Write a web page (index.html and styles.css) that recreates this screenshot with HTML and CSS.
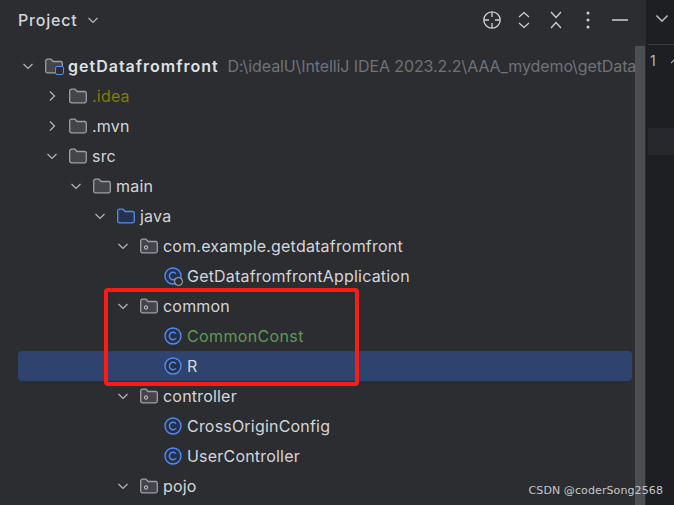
FILE: index.html
```html
<!DOCTYPE html>
<html lang="en">
<head>
<meta charset="utf-8">
<title>Project</title>
<link rel="stylesheet" href="styles.css">
</head>
<body>
<svg class="defs" width="0" height="0" aria-hidden="true">
  <defs>
    <symbol id="open" viewBox="0 0 16 16"><path d="M3.500 6 8 10.500 12.500 6" fill="none" stroke="#b4b8bf" stroke-width="1.200"/></symbol>
    <symbol id="closed" viewBox="0 0 16 16"><path d="M6 3.500 10.500 8 6 12.500" fill="none" stroke="#b4b8bf" stroke-width="1.200"/></symbol>
    <symbol id="folder" viewBox="0 0 18 16"><path d="M.7 3A1.800 1.800 0 0 1 2.500 1.200H6l2 2.300h7.500a1.800 1.800 0 0 1 1.800 1.800v7.700a1.800 1.800 0 0 1-1.800 1.800h-13A1.800 1.800 0 0 1 .7 13Z" fill="#43454a" stroke="#9da0a8" stroke-width="1.300"/></symbol>
    <symbol id="source" viewBox="0 0 18 16"><path d="M.7 3A1.800 1.800 0 0 1 2.500 1.200H6l2 2.300h7.500a1.800 1.800 0 0 1 1.800 1.800v7.700a1.800 1.800 0 0 1-1.800 1.800h-13A1.800 1.800 0 0 1 .7 13Z" fill="#25324d" stroke="#548af7" stroke-width="1.300"/></symbol>
    <symbol id="package" viewBox="0 0 18 16"><path d="M.7 3A1.800 1.800 0 0 1 2.500 1.200H6l2 2.300h7.500a1.800 1.800 0 0 1 1.800 1.800v7.700a1.800 1.800 0 0 1-1.800 1.800h-13A1.800 1.800 0 0 1 .7 13Z" fill="#43454a" stroke="#9da0a8" stroke-width="1.300"/><circle cx="6" cy="9.500" r="1.600" fill="none" stroke="#b4b8bf" stroke-width="1.100"/></symbol>
    <symbol id="class" viewBox="0 0 18 18"><circle cx="9" cy="9" r="8" fill="#25324d" stroke="#548af7" stroke-width="1.400"/><path d="M11.900 6.600A3.700 3.700 0 1 0 11.900 11.400" fill="none" stroke="#548af7" stroke-width="1.400"/></symbol>
  </defs>
</svg>

<main class="window">
  <section class="panel">
    <div class="scrollbar"></div>
    <header class="panel-head">
      <div class="panel-title">
        <span class="title-text">Project</span>
        <svg class="ico-14"><use href="#open"/></svg>
      </div>
      <div class="tools">
        <svg class="tool" viewBox="0 0 20 20"><circle cx="10" cy="10" r="8.200" fill="none" stroke="#ced0d6" stroke-width="1.300"/><path d="M10 2v5M10 13v5M2 10h5M13 10h5" stroke="#ced0d6" stroke-width="1.300"/></svg>
        <svg class="tool" viewBox="0 0 20 20"><path d="M5 7 10 2.500l5 4.500M5 13l5 4.500 5-4.500" fill="none" stroke="#ced0d6" stroke-width="1.300"/></svg>
        <svg class="tool" viewBox="0 0 20 20"><path d="M5 2 10 7.500 15 2M5 18l5-5.500L15 18" fill="none" stroke="#ced0d6" stroke-width="1.300"/></svg>
        <svg class="tool" viewBox="0 0 20 20"><circle cx="10" cy="3" r="1.500" fill="#ced0d6"/><circle cx="10" cy="10" r="1.500" fill="#ced0d6"/><circle cx="10" cy="17" r="1.500" fill="#ced0d6"/></svg>
        <svg class="tool" viewBox="0 0 20 20"><path d="M2 10h16" stroke="#ced0d6" stroke-width="1.500"/></svg>
      </div>
    </header>

    <div class="tree">
      <div class="row d0">
        <svg class="chev"><use href="#open"/></svg>
        <span class="root-icon">
          <svg class="ico-folder"><use href="#folder"/></svg>
          <i class="module-badge"></i>
        </span>
        <span class="name root-name">getDatafromfront</span>
        <span class="path">D:\idealU\IntelliJ IDEA 2023.2.2\AAA_mydemo\getData</span>
      </div>
      <div class="row d1"><svg class="chev"><use href="#closed"/></svg><svg class="ico-folder"><use href="#folder"/></svg><span class="name ignored">.idea</span></div>
      <div class="row d1"><svg class="chev"><use href="#closed"/></svg><svg class="ico-folder"><use href="#folder"/></svg><span class="name">.mvn</span></div>
      <div class="row d1"><svg class="chev"><use href="#open"/></svg><svg class="ico-folder"><use href="#folder"/></svg><span class="name">src</span></div>
      <div class="row d2"><svg class="chev"><use href="#open"/></svg><svg class="ico-folder"><use href="#folder"/></svg><span class="name">main</span></div>
      <div class="row d3"><svg class="chev"><use href="#open"/></svg><svg class="ico-folder"><use href="#source"/></svg><span class="name">java</span></div>
      <div class="row d4"><svg class="chev"><use href="#open"/></svg><svg class="ico-folder"><use href="#package"/></svg><span class="name">com.example.getdatafromfront</span></div>
      <div class="row d5">
        <span class="class-icon">
          <svg class="ico-class"><use href="#class"/></svg>
          <i class="run-badge"></i>
        </span>
        <span class="name">GetDatafromfrontApplication</span>
      </div>
      <div class="row d4"><svg class="chev"><use href="#open"/></svg><svg class="ico-folder"><use href="#package"/></svg><span class="name">common</span></div>
      <div class="row d5"><svg class="ico-class"><use href="#class"/></svg><span class="name added">CommonConst</span></div>
      <div class="row d5 selected"><svg class="ico-class"><use href="#class"/></svg><span class="name">R</span></div>
      <div class="row d4"><svg class="chev"><use href="#open"/></svg><svg class="ico-folder"><use href="#package"/></svg><span class="name">controller</span></div>
      <div class="row d5"><svg class="ico-class"><use href="#class"/></svg><span class="name">CrossOriginConfig</span></div>
      <div class="row d5"><svg class="ico-class"><use href="#class"/></svg><span class="name">UserController</span></div>
      <div class="row d4"><svg class="chev"><use href="#open"/></svg><svg class="ico-folder"><use href="#package"/></svg><span class="name">pojo</span></div>
    </div>
  </section>

  <section class="editor">
    <div class="tabs"><svg class="ico-16"><use href="#open"/></svg></div>
    <div class="gutter">
      <span>1</span>
      <svg class="fold" viewBox="0 0 8 8"><path d="M0 6 4 2 8 6" fill="none" stroke="#b4b8bf" stroke-width="1.200"/></svg>
    </div>
    <div class="caret-line"></div>
  </section>
</main>

<div class="callout"></div>
<div class="watermark">CSDN @coderSong2568</div>
</body>
</html>
```

FILE: styles.css
```css
* { box-sizing: border-box; }

html, body {
  margin: 0;
  height: 100%;
  overflow: hidden;
  background: #2b2d30;
}

body {
  font-family: Inter, "Liberation Sans", sans-serif;
  font-size: 16px;
  letter-spacing: .2px;
  color: #d4d6db;
}

.defs { position: absolute; }

.window {
  display: flex;
  width: 674px;
  height: 505px;
}

.panel {
  position: relative;
  flex: 0 0 647px;
  border-right: 1px solid #1e1f22;
  overflow: hidden;
}

.panel-head {
  display: flex;
  align-items: center;
  justify-content: space-between;
  height: 39px;
  padding: 0 16px 0 18px;
}

.panel-title {
  display: flex;
  align-items: center;
  gap: 7px;
}

.title-text {
  font-weight: 500;
  letter-spacing: .8px;
}

.ico-14 { width: 16px; height: 16px; }
.ico-16 { width: 20px; height: 20px; }

.tools {
  display: flex;
  align-items: center;
  gap: 12px;
}

.tool { width: 20px; height: 20px; }

.tree {
  position: relative;
  padding-top: 12px;
}

.row {
  display: flex;
  align-items: center;
  height: 30px;
  white-space: nowrap;
}

.d0 { padding-left: 20px; }
.d1 { padding-left: 44px; }
.d2 { padding-left: 68px; }
.d3 { padding-left: 92px; }
.d4 { padding-left: 115px; }
.d5 { padding-left: 164px; }

.chev {
  flex: none;
  width: 16px;
  height: 16px;
  margin-right: 9px;
}

.ico-folder {
  flex: none;
  width: 18px;
  height: 16px;
  margin-right: 5px;
}

.ico-class {
  flex: none;
  width: 18px;
  height: 18px;
  margin-right: 5px;
}

.root-icon, .class-icon {
  position: relative;
  display: flex;
  flex: none;
}

.module-badge {
  position: absolute;
  left: 10px;
  top: 8px;
  width: 9px;
  height: 9px;
  border: 1.500px solid #548af7;
  border-radius: 2px;
  background: #2b2d30;
}

.run-badge {
  position: absolute;
  left: 10px;
  top: 10px;
  width: 9px;
  height: 9px;
  border: 1.200px solid #b4b8bf;
  border-radius: 50%;
  background: #2b2d30;
}

.name { line-height: 30px; }

.root-name {
  font-weight: 600;
  letter-spacing: 1px;
  color: #dfe1e5;
  margin-right: 9px;
}

.path {
  color: #6f737a;
  letter-spacing: -.1px;
}

.ignored { color: #7f7f00; }
.added { color: #5f9a55; letter-spacing: .36px; }

.selected {
  position: relative;
  z-index: 0;
}

.selected::before {
  content: "";
  position: absolute;
  z-index: -1;
  left: 18px;
  right: 14px;
  top: 0;
  height: 30px;
  border-radius: 4px;
  background: #2e436e;
}

.scrollbar {
  position: absolute;
  top: 46px;
  bottom: 0;
  right: 1px;
  width: 10px;
  background: #4d4e51;
}

.editor {
  flex: 1;
  min-width: 0;
  padding-left: 1px;
  background: #1e1f22;
}

.tabs {
  display: flex;
  align-items: center;
  height: 45px;
  padding: 0 0 8px 4px;
  border-bottom: 1px solid #393b40;
}

.gutter {
  display: flex;
  align-items: center;
  justify-content: space-between;
  height: 83px;
  padding: 4px 0 55px 2px;
  font-size: 14px;
  line-height: 24px;
  color: #b4b8bf;
}

.fold {
  width: 8px;
  height: 8px;
  margin-right: -5px;
}

.caret-line {
  height: 27px;
  background: #26282e;
}

.callout {
  position: absolute;
  left: 104px;
  top: 288px;
  width: 255px;
  height: 98px;
  border: 4px solid #fb1c15;
  border-radius: 4px;
}

.watermark {
  position: absolute;
  right: 11px;
  top: 483px;
  font-family: "DejaVu Sans", sans-serif;
  font-size: 11px;
  letter-spacing: .1px;
  line-height: 16px;
  color: #c8c8c8;
}
```
